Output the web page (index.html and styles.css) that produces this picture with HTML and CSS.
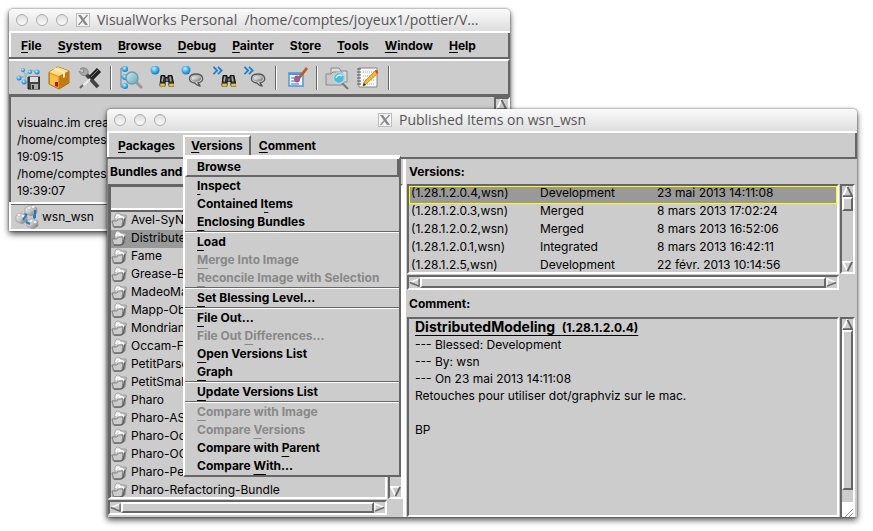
FILE: index.html
```html
<!DOCTYPE html>
<html lang="en">
<head>
<meta charset="utf-8">
<title>VisualWorks Personal</title>
<link rel="stylesheet" href="styles.css">
</head>
<body>
<svg class="defs" aria-hidden="true">
  <defs>
    <linearGradient id="metal" x1="0" y1="0" x2="1" y2="1"><stop offset="0" stop-color="#fff"/><stop offset=".5" stop-color="#c4c4c4"/><stop offset="1" stop-color="#666"/></linearGradient>
    <linearGradient id="lens" x1="0" y1="0" x2="1" y2="1"><stop offset="0" stop-color="#d5e9ee"/><stop offset="1" stop-color="#5fa9bd"/></linearGradient>
    <radialGradient id="ball" cx=".4" cy=".35" r=".65"><stop offset="0" stop-color="#c5f0ff"/><stop offset=".5" stop-color="#4fb4ee"/><stop offset="1" stop-color="#1676c8"/></radialGradient>
    <symbol id="x11" viewBox="0 0 14 14"><rect x=".5" y=".5" width="13" height="13" fill="#f4f4f4" stroke="#bbb"/><path d="M2 2h3l7 10H9z" fill="#888"/><path d="M11.500 2 2.500 12" stroke="#888" stroke-width="1.200"/></symbol>
    <symbol id="binoc" viewBox="0 0 16 14"><path d="M2 2h4v2h3V2h4l2 10h-5V8H6v4H1z" fill="#333" stroke="#111"/><path d="M4 3 3 8M11 3l1 5" stroke="#aaa" stroke-width="1.500"/><path d="M1 10h5v3H1zM10 10h5v3h-5z" fill="#e9c53c" stroke="#574816" stroke-width=".5"/><path d="M7 5h2v3H7z" fill="#777"/></symbol>
    <symbol id="bubble" viewBox="0 0 16 14"><path d="M7 10C-1 9 0 1 8 1s9 8 2 9c1 1.500 2 2 2 3-2-.5-4-1-5-3z" fill="#ddd" stroke="#555" stroke-width="1.300"/><ellipse cx="8" cy="5.500" rx="5" ry="2.800" fill="url(#metal)" stroke="#888" stroke-width=".7"/></symbol>
    <symbol id="chev" viewBox="0 0 12 10"><path d="m1 1 4 4-4 4M6 1l4 4-4 4" fill="none" stroke="#1d80cf" stroke-width="2"/></symbol>
    <symbol id="pkg" viewBox="0 0 16 16"><path d="M4 5c0-4 3-5 5-3l2 1h3c2 0 2 2 1 3l-1 7-3 2H2L1 9h3z" fill="url(#metal)" stroke="#888" stroke-width=".7"/><path d="M5 6c0-3 4-3 4-1 0 1-1 1-2 1M9 5c3-1 4 1 4 2" fill="none" stroke="#fff" stroke-width="1.500"/><path d="M1 9h5l1-2h5l-1 7-2 1H3z" fill="#ccc" stroke="#777" stroke-width=".8"/><path d="M3 15h7l2-1 2-8" fill="none" stroke="#555"/></symbol>
    <symbol id="up" viewBox="0 0 12 12"><path d="M6 1 1 11h10z" fill="#ccc"/><path d="M6 0 1 11" stroke="#fff" stroke-width="2"/><path d="m6 1 5 10H1" fill="none" stroke="#666" stroke-width="2"/></symbol>
    <symbol id="down" viewBox="0 0 12 12"><path d="M1 1h10L6 11z" fill="#ccc"/><path d="M11 1H1l5 10" fill="none" stroke="#fff" stroke-width="2"/><path d="M11 1 6 11" stroke="#666" stroke-width="2"/></symbol>
    <symbol id="left" viewBox="0 0 12 10"><path d="M11 1v8L1 5z" fill="#ccc"/><path d="M11 1 1 5" stroke="#fff" stroke-width="1.500"/><path d="M1 5l10 4V1" fill="none" stroke="#666" stroke-width="1.500"/></symbol>
    <symbol id="right" viewBox="0 0 12 10"><path d="M1 1v8l10-4z" fill="#ccc"/><path d="M11 5 1 1v8" fill="none" stroke="#fff" stroke-width="1.500"/><path d="M1 9l10-4" stroke="#666" stroke-width="1.500"/></symbol>
  </defs>
</svg>

<section class="window launcher" aria-label="VisualWorks Personal">
  <header class="titlebar start">
    <div class="lights"><i></i><i></i><i></i></div>
    <div class="title"><svg><use href="#x11"/></svg><span>VisualWorks Personal&nbsp; /home/comptes/joyeux1/pottier/V...</span></div>
  </header>
  <nav class="menubar">
    <button><u>F</u>ile</button><button><u>S</u>ystem</button><button><u>B</u>rowse</button><button><u>D</u>ebug</button><button><u>P</u>ainter</button><button>St<u>o</u>re</button><button><u>T</u>ools</button><button><u>W</u>indow</button><button><u>H</u>elp</button>
  </nav>
  <div class="toolbar">
    <button aria-label="Save image"><svg viewBox="0 0 24 24"><path d="m3 13 7-4 5-5 5 2M10 9 7 5M10 9l-1 7" fill="none" stroke="#9ab9c9" stroke-width="1.500"/><g fill="url(#ball)"><circle cx="3" cy="12" r="2.500"/><circle cx="7" cy="4" r="2"/><circle cx="14" cy="6" r="2"/><circle cx="21" cy="6" r="2.500"/><circle cx="8" cy="16" r="2.500"/></g><path d="M12 11h12v12H12z" fill="#444" stroke="#222"/><path d="M14 11h8v5h-8z" fill="#ddd"/><path d="M15 18h7v5h-7z" fill="#aaa"/><path d="M16 19h2v4h-2z" fill="#333"/></svg></button>
    <button aria-label="Packages"><svg viewBox="0 0 24 24"><path d="m2 6 9-5 11 4v12l-10 6-10-5z" fill="#e39c22" stroke="#a86c10"/><path d="m2 6 9-5 11 4-10 5z" fill="#ffdc82"/><path d="M12 10v13l10-6V5z" fill="#c47a12"/><path d="m6 3 10 4v5l2-1V6L9 2z" fill="#fff0bd"/><path d="m3 8 8 3v11l-8-4z" fill="#f7c04b"/><path d="M8 16h3v5l-3-1z" fill="#a51d12"/></svg></button>
    <button aria-label="Tools"><svg viewBox="0 0 24 24"><path d="m7 7 13 14" stroke="#444" stroke-width="4"/><path d="M2 3c4-3 9 0 8 4-3 5-8 2-9-2l4 2 1-4z" fill="#aaa" stroke="#888"/><path d="m21 4-8 8" stroke="#222" stroke-width="6"/><path d="m20 4-7 7" stroke="#888"/><path d="m12 13-7 7" stroke="#eee" stroke-width="2"/><path d="m5 19-3 3" stroke="#666" stroke-width="2"/></svg></button>
    <span class="sep"></span>
    <button aria-label="Find"><svg viewBox="0 0 24 24"><path d="M5 2H2v19h4M2 11h5" fill="none" stroke="#67879a"/><g fill="url(#ball)"><circle cx="6" cy="3" r="3"/><circle cx="6" cy="11" r="3"/><circle cx="6" cy="20" r="3"/></g><path d="m17 16 6 6" stroke="#999" stroke-width="3"/><circle cx="13" cy="12" r="6" fill="url(#lens)" stroke="#719eaa" stroke-width="1.500"/></svg></button>
    <button aria-label="Find class"><svg viewBox="0 0 24 24"><circle cx="5" cy="4" r="4.500" fill="url(#ball)"/><use href="#binoc" x="9" y="7" width="16" height="15"/></svg></button>
    <button aria-label="Find comment"><svg viewBox="0 0 24 24"><circle cx="5" cy="4" r="4.500" fill="url(#ball)"/><use href="#bubble" x="7" y="6" width="16" height="16"/></svg></button>
    <button aria-label="Find references"><svg viewBox="0 0 24 24"><use href="#chev" width="12" height="9"/><use href="#binoc" x="9" y="7" width="16" height="15"/></svg></button>
    <button aria-label="Find senders"><svg viewBox="0 0 24 24"><use href="#chev" width="12" height="9"/><use href="#bubble" x="7" y="6" width="16" height="16"/></svg></button>
    <span class="sep"></span>
    <button aria-label="Paint"><svg viewBox="0 0 24 24"><path d="M5 7h14v13H5z" fill="#f5faff" stroke="#4d96da" stroke-width="1.500"/><path d="M5 7h14v2H5z" fill="#4d96da"/><path d="M7 12h5M7 15h4M7 18h8" stroke="#4777ad"/><path d="m14 11 8-10 2 2-8 10z" fill="#b85f25"/><ellipse cx="13" cy="13" rx="3" ry="3.500" fill="#a45990"/></svg></button>
    <span class="sep"></span>
    <button aria-label="Find file"><svg viewBox="0 0 24 24"><path d="M6 2h8l2 3h6v11H6z" fill="#ddd" stroke="#888"/><path d="M1 8h5l2-2h9v13H1z" fill="#c8c8c8" stroke="#888"/><path d="m16 16 7 7" stroke="#777" stroke-width="2"/><circle cx="14" cy="12" r="5.500" fill="#4dbcd8" stroke="#bdd3d9" stroke-width="1.500"/><path d="M11 12c1-3 4-4 6-2" fill="none" stroke="#c8ffff" stroke-width="1.500"/></svg></button>
    <button aria-label="Workspace"><svg viewBox="0 0 24 24"><path d="M3 2h18v19H3z" fill="#f8f8f8" stroke="#888"/><path d="M1 3h4M1 6h4M1 9h4M1 12h4M1 15h4M1 18h4" stroke="#555"/><path d="M7 6h11M7 10h11M7 14h11M7 18h11" stroke="#aaa" stroke-dasharray="1 1"/><path d="m7 20 1-4L20 4l2 3L10 18z" fill="#f7b821" stroke="#b37616" stroke-width=".7"/><path d="m19 5 2-1 1 2-1 2z" fill="#d43f32"/><path d="m7 20 1-3 2 2z" fill="#222"/></svg></button>
    <span class="sep"></span>
  </div>
  <div class="transcript">
    <pre>visualnc.im crea
/home/comptes/
19:09:15
/home/comptes/
19:39:07</pre>
    <div class="scroll vertical"><svg class="arrow"><use href="#up"/></svg></div>
  </div>
  <footer class="status"><svg viewBox="0 0 24 24"><path d="m6 14 8-9m5-1v12m-10-2 9 5" stroke="#237bc7" stroke-width="2"/><g fill="url(#metal)" stroke="#999" stroke-width=".7"><path d="m1 11 5-3 6 3v5l-5 3-6-3z"/><path d="m10 3 5-3 7 3v5l-6 3-6-3z"/><path d="m12 16 5-3 6 3v5l-5 3-6-3z"/></g><g fill="#fff" stroke="#aaa" stroke-width=".6"><ellipse cx="4" cy="10" rx="2" ry="1.300"/><ellipse cx="8" cy="11" rx="2" ry="1.300"/><ellipse cx="14" cy="3" rx="2" ry="1.300"/><ellipse cx="18" cy="2" rx="2" ry="1.300"/><ellipse cx="16" cy="16" rx="2" ry="1.300"/><ellipse cx="20" cy="17" rx="2" ry="1.300"/></g><path d="m8 15 4-6M20 5v8m-9 4 4 2" stroke="#237bc7" stroke-width="2"/></svg><span>wsn_wsn</span></footer>
</section>

<section class="window published" aria-label="Published Items on wsn_wsn">
  <header class="titlebar centered">
    <div class="lights"><i></i><i></i><i></i></div>
    <div class="title"><svg><use href="#x11"/></svg><span>Published Items on wsn_wsn</span></div>
  </header>
  <nav class="menubar">
    <button><u>P</u>ackages</button>
    <div class="menu-anchor">
      <button class="open"><u>V</u>ersions</button>
      <div class="popup">
        <button class="active">Browse</button>
        <button><u>I</u>nspect</button>
        <button>Contained I<u>t</u>ems</button>
        <button><u>E</u>nclosing Bundles</button>
        <hr>
        <button><u>L</u>oad</button>
        <button disabled><u>M</u>erge Into Image</button>
        <button disabled><u>R</u>econcile Image with Selection</button>
        <hr>
        <button><u>S</u>et Blessing Level...</button>
        <hr>
        <button><u>F</u>ile Out...</button>
        <button disabled>File Out <u>D</u>ifferences...</button>
        <button><u>O</u>pen Versions List</button>
        <button><u>G</u>raph</button>
        <hr>
        <button><u>U</u>pdate Versions List</button>
        <hr>
        <button disabled><u>C</u>ompare with Image</button>
        <button disabled>Compare <u>V</u>ersions</button>
        <button>Compare with <u>P</u>arent</button>
        <button>Compare <u>W</u>ith...</button>
      </div>
    </div>
    <button><u>C</u>omment</button>
  </nav>
  <div class="panes">
    <div class="pane bundles">
      <h2>Bundles and</h2>
      <div class="framed">
        <div class="view">
          <div class="list-head"></div>
          <ul>
            <li><svg><use href="#pkg"/></svg>Avel-SyN</li>
            <li class="selected"><svg><use href="#pkg"/></svg>Distribute</li>
            <li><svg><use href="#pkg"/></svg>Fame</li>
            <li><svg><use href="#pkg"/></svg>Grease-B</li>
            <li><svg><use href="#pkg"/></svg>MadeoMa</li>
            <li><svg><use href="#pkg"/></svg>Mapp-Ob</li>
            <li><svg><use href="#pkg"/></svg>Mondrian</li>
            <li><svg><use href="#pkg"/></svg>Occam-F</li>
            <li><svg><use href="#pkg"/></svg>PetitParse</li>
            <li><svg><use href="#pkg"/></svg>PetitSmal</li>
            <li><svg><use href="#pkg"/></svg>Pharo</li>
            <li><svg><use href="#pkg"/></svg>Pharo-AS</li>
            <li><svg><use href="#pkg"/></svg>Pharo-Oc</li>
            <li><svg><use href="#pkg"/></svg>Pharo-OC</li>
            <li><svg><use href="#pkg"/></svg>Pharo-Pe</li>
            <li><svg><use href="#pkg"/></svg>Pharo-Refactoring-Bundle</li>
          </ul>
        </div>
        <div class="scroll vertical"><svg class="arrow"><use href="#up"/></svg><span class="rest"></span><svg class="arrow"><use href="#down"/></svg></div>
        <div class="scroll horizontal"><svg class="arrow"><use href="#left"/></svg><span class="thumb full"></span><svg class="arrow"><use href="#right"/></svg></div>
      </div>
    </div>
    <div class="pane details">
      <h2>Versions:</h2>
      <div class="framed versions">
        <div class="view">
          <table>
            <colgroup><col class="c-name"><col class="c-level"><col></colgroup>
            <tr class="selected"><td>(1.28.1.2.0.4,wsn)</td><td>Development</td><td>23 mai 2013 14:11:08</td></tr>
            <tr><td>(1.28.1.2.0.3,wsn)</td><td>Merged</td><td>8 mars 2013 17:02:24</td></tr>
            <tr><td>(1.28.1.2.0.2,wsn)</td><td>Merged</td><td>8 mars 2013 16:52:06</td></tr>
            <tr><td>(1.28.1.2.0.1,wsn)</td><td>Integrated</td><td>8 mars 2013 16:42:11</td></tr>
            <tr><td>(1.28.1.2.5,wsn)</td><td>Development</td><td>22 févr. 2013 10:14:56</td></tr>
          </table>
        </div>
        <div class="scroll vertical"><svg class="arrow"><use href="#up"/></svg><span class="thumb short"></span><span class="rest"></span><svg class="arrow"><use href="#down"/></svg></div>
        <div class="scroll horizontal"><svg class="arrow"><use href="#left"/></svg><span class="thumb full"></span><svg class="arrow"><use href="#right"/></svg></div>
      </div>
      <h2 class="comment-label">Comment:</h2>
      <div class="framed comment">
        <div class="view">
          <h3>DistributedModeling&nbsp; <small>(1.28.1.2.0.4)</small></h3>
          <p>--- Blessed: Development<br>--- By: wsn<br>--- On 23 mai 2013 14:11:08<br>Retouches pour utiliser dot/graphviz sur le mac.<br><br>BP</p>
        </div>
        <div class="scroll vertical"><svg class="arrow"><use href="#up"/></svg><span class="thumb full"></span><svg class="grip" viewBox="0 0 15 15"><path d="M3 15 15 3M7 15l8-8M11 15l4-4" stroke="#999"/></svg></div>
      </div>
    </div>
  </div>
</section>
</body>
</html>
```
FILE: styles.css
```css
* { box-sizing: border-box; }
body {
  margin: 0;
  min-height: 100vh;
  position: relative;
  overflow: hidden;
  background: #fff;
  color: #000;
  font: 12px/17px Inter, "Liberation Sans", sans-serif;
}
.defs { position: absolute; width: 0; height: 0; }
button {
  margin: 0;
  border: 0;
  background: none;
  color: inherit;
  font: bold 12px/18px Inter, "Liberation Sans", sans-serif;
  white-space: nowrap;
}
u { text-underline-offset: 2px; text-decoration-thickness: 1px; text-decoration-skip-ink: none; }
h2 { margin: 0; font-size: 12px; line-height: 25px; padding-left: 2px; }

/* Windows on the desktop */
.window {
  position: absolute;
  display: flex;
  flex-direction: column;
  background: #ccc;
  border-radius: 4px 4px 0 0;
  box-shadow: 0 3px 6px rgba(0, 0, 0, .7), 0 0 2px rgba(0, 0, 0, .6);
}
.launcher { left: 9px; top: 9px; right: 363px; }
.published { left: 107px; top: 109px; right: 16px; bottom: 14px; }

.titlebar {
  height: 24px;
  flex: none;
  align-items: center;
  border-bottom: 2px solid #fff;
  border-radius: 4px 4px 0 0;
  background: linear-gradient(#fafafa, #dedede);
  color: #555;
  font: 14px/20px "Open Sans", sans-serif;
}
.titlebar.start { display: flex; gap: 8px; }
.titlebar.centered { display: grid; grid-template-columns: 1fr auto 1fr; }
.lights { display: flex; gap: 8px; padding-left: 7px; }
.lights i {
  width: 12px;
  height: 12px;
  border: 1px solid #aaa;
  border-radius: 50%;
  background: linear-gradient(#ddd, #fafafa);
}
.title { display: flex; align-items: center; gap: 7px; white-space: nowrap; }
.title svg { width: 14px; height: 14px; }

.menubar {
  display: flex;
  flex: none;
  align-items: center;
  height: 26px;
  border: solid #666;
  border-width: 0 2px 2px 0;
  box-shadow: inset 2px 0 #fff;
  padding: 2px 0 0 4px;
}
.menubar > button, .open { padding: 0 8px; }
.published .menubar { padding-left: 3px; }
.open {
  display: block;
  border: 2px solid;
  border-color: #fff #666 #666 #fff;
  padding: 0 6px;
}

/* Drop-down under the open menu */
.menu-anchor { position: relative; }
.popup {
  position: absolute;
  z-index: 2;
  top: 20px;
  left: 0;
  width: 218px;
  border: solid;
  border-width: 4px 2px 2px;
  border-color: #fff #666 #666 #fff;
  background: #ccc;
}
.popup button { display: block; width: 100%; padding: 0 12px; text-align: left; }
.popup u { text-underline-offset: 4px; }
.popup button:disabled { color: #888; }
.popup .active {
  border: solid;
  border-width: 0 2px 2px;
  border-color: #fff #666 #666 #fff;
  padding: 0 10px;
  line-height: 16px;
}
.popup hr { height: 2px; margin: 0; border: solid; border-width: 1px 0; border-color: #666 transparent #fff; }

.toolbar {
  display: flex;
  gap: 7px;
  align-items: center;
  height: 38px;
  padding-left: 7px;
  border: solid;
  border-width: 2px 2px 3px 0;
  border-color: #fff #666 #666;
}
.toolbar button { width: 24px; height: 24px; padding: 0; }
.toolbar button svg { display: block; width: 24px; height: 24px; }
.sep { width: 2px; height: 24px; margin-left: 1px; background: #666; border-right: 1px solid #fff; }

.transcript { display: flex; justify-content: space-between; height: 105px; border-left: 2px solid #666; }
.transcript pre { margin: 17px 0 0 6px; font: inherit; }
.status {
  display: flex;
  align-items: center;
  gap: 3px;
  height: 29px;
  padding-left: 4px;
  border: 2px solid #fff;
  border-width: 2px 0 2px 2px;
  box-shadow: inset 0 1px #666;
}
.status svg { width: 24px; height: 24px; }

/* Two panes */
.panes { display: flex; flex: 1; min-height: 0; }
.pane { display: flex; flex-direction: column; min-height: 0; }
.bundles { width: 299px; flex: none; border-right: 3px solid #fff; border-left: 1px solid #888; }
.details { flex: 1; min-width: 0; padding: 0 2px 0 1px; }
.framed {
  display: grid;
  grid-template-columns: minmax(0, 1fr) 15px;
  grid-template-rows: minmax(0, 1fr) 15px;
  column-gap: 1px;
  row-gap: 1px;
  min-height: 0;
}
.bundles .framed { flex: 1; padding-bottom: 2px; }
.framed > .view { overflow: hidden; border: 2px solid; border-color: #666 #fff #fff #666; }
.bundles .view { border-width: 3px 2px 2px 3px; }
.list-head { height: 23px; border-bottom: 2px solid #fff; box-shadow: 0 2px #666; margin-bottom: 2px; }
ul { margin: 0; padding: 0; list-style: none; }
li { display: flex; align-items: center; gap: 4px; height: 18px; line-height: 14px; padding-bottom: 2px; white-space: nowrap; }
li svg { width: 16px; height: 16px; flex: none; }
.selected { background: #999; }

table { width: 100%; border-collapse: collapse; table-layout: fixed; }
.c-name { width: 129px; }
.c-level { width: 117px; }
td { height: 18px; padding: 0 0 4px 2px; line-height: 14px; }
tr.selected { outline: 1px solid #ff0; outline-offset: -1px; }
.versions { height: 106px; flex: none; }
.comment-label { line-height: 27px; }
.comment { flex: 1; grid-template-rows: minmax(0, 1fr); }
.comment .view { padding-left: 6px; }
h3 { margin: 0; font-size: 14px; line-height: 16px; text-decoration: underline; text-underline-offset: 3px; text-decoration-thickness: 1px; text-decoration-skip-ink: none; }
h3 small { font-size: 12px; }
p { margin: 0; }

/* Scroll bars */
.scroll { display: flex; border: 2px solid; border-color: #666 #fff #fff #666; overflow: hidden; }
.vertical { flex-direction: column; }
.horizontal { align-items: center; }
.transcript .scroll { width: 16px; }
.arrow { width: 11px; height: 11px; flex: none; }
.thumb { border: 2px solid; border-color: #fff #666 #666 #fff; }
.horizontal .thumb { height: 11px; }
.full, .rest { flex: 1; }
.short { height: 14px; flex: none; }
.comment .scroll { border-bottom: 0; }
.comment .full { margin-bottom: 12px; }
.grip { width: 15px; height: 15px; flex: none; background: #fff; }
```
